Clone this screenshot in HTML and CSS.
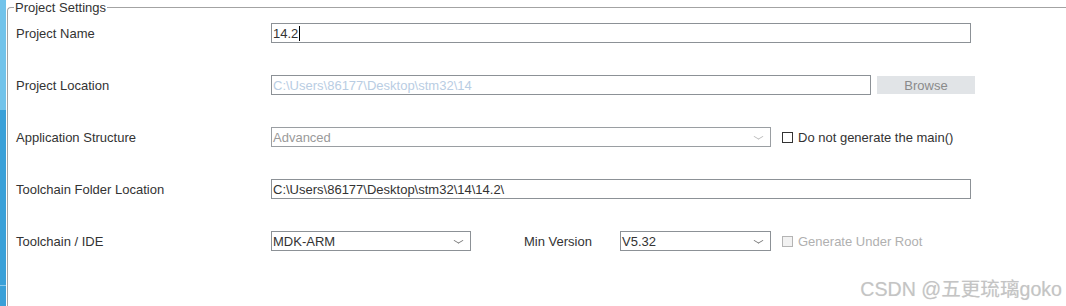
FILE: index.html
```html
<!DOCTYPE html>
<html>
<head>
<meta charset="utf-8">
<link rel="stylesheet" href="styles.css">
</head>
<body>
<div class="page">
  <div class="sidebar"><div class="sb-top"></div><div class="sb-mid"></div><div class="sb-end"></div></div>
  <fieldset class="panel">
    <legend class="legend">Project Settings</legend>
    <div class="rows">
      <div class="row">
        <div class="label">Project Name</div>
        <div class="field w700"><span class="txt">14.2</span><span class="caret"></span></div>
      </div>
      <div class="row">
        <div class="label">Project Location</div>
        <div class="field w600 disabled"><span class="txt">C:\Users\86177\Desktop\stm32\14</span></div>
        <div class="button">Browse</div>
      </div>
      <div class="row">
        <div class="label">Application Structure</div>
        <div class="field select w500 grey"><span class="txt">Advanced</span><span class="chev light"></span></div>
        <div class="check"><span class="box"></span><span class="ctext">Do not generate the main()</span></div>
      </div>
      <div class="row">
        <div class="label">Toolchain Folder Location</div>
        <div class="field w700"><span class="txt">C:\Users\86177\Desktop\stm32\14\14.2\</span></div>
      </div>
      <div class="row">
        <div class="label">Toolchain / IDE</div>
        <div class="field select w200"><span class="txt">MDK-ARM</span><span class="chev"></span></div>
        <div class="minlabel">Min Version</div>
        <div class="field select w151"><span class="txt">V5.32</span><span class="chev"></span></div>
        <div class="check off"><span class="box"></span><span class="ctext">Generate Under Root</span></div>
      </div>
    </div>
  </fieldset>
</div>
<div class="watermark">CSDN @五更琉璃goko</div>
</body>
</html>
```

FILE: styles.css
```css
html, body {
  margin: 0;
  padding: 0;
  background: #ffffff;
  width: 1066px;
  height: 306px;
  overflow: hidden;
  font-family: "Liberation Sans", Arial, sans-serif;
  font-size: 13px;
  color: #333333;
}

.page {
  display: flex;
  height: 306px;
}

.sidebar {
  width: 6px;
  display: flex;
  flex-direction: column;
  margin-right: 1px;
}

.sb-top {
  height: 110px;
  background: #72c3ea;
}

.sb-mid {
  flex: 1;
  background: #3aa0d8;
}

.sb-end {
  height: 20px;
  background: #3aa0d8;
  border-top: 1px solid #8cc8ea;
}

.panel {
  flex: 1;
  margin: 0;
  padding: 0 0 0 8px;
  border: none;
  border-top: 1px solid #a3a3a3;
  border-left: 1px solid #a3a3a3;
  border-top-left-radius: 4px;
  min-width: 0;
}

.legend {
  margin-left: -2px;
  padding: 0 1px;
  font-size: 13px;
  line-height: 15px;
  color: #333333;
}

.rows {
  display: flex;
  flex-direction: column;
  gap: 32px;
  padding-top: 8px;
}

.row {
  display: flex;
  align-items: center;
  height: 20px;
}

.label {
  width: 255px;
  flex: none;
  line-height: 15px;
}

.field {
  box-sizing: border-box;
  height: 20px;
  border: 1px solid #8c9196;
  display: flex;
  align-items: center;
  padding-left: 1px;
  position: relative;
  flex: none;
  color: #333333;
  background: #ffffff;
}

.field .txt {
  line-height: 15px;
}

.caret {
  width: 1px;
  height: 15px;
  background: #000000;
  margin-left: 1px;
}

.w700 { width: 700px; }
.w600 { width: 600px; }
.w500 { width: 500px; }
.w200 { width: 200px; }
.w151 { width: 151px; }

.disabled {
  color: #b9cde3;
}

.grey {
  color: #9a9a9a;
  border-color: #9a9ea2;
}

.chev {
  position: absolute;
  right: 8px;
  top: 5px;
  width: 6px;
  height: 6px;
  border-right: 1px solid #777777;
  border-bottom: 1px solid #777777;
  transform: scaleY(0.6) rotate(45deg);
}

.chev.light {
  border-color: #bbbbbb;
}

.button {
  margin-left: 6px;
  width: 98px;
  height: 18px;
  background: #e1e4e7;
  color: #8a8a8a;
  display: flex;
  align-items: center;
  justify-content: center;
  line-height: 15px;
  flex: none;
}

.check {
  display: flex;
  align-items: center;
  margin-left: 11px;
  line-height: 15px;
}

.check .box {
  box-sizing: border-box;
  width: 11px;
  height: 11px;
  border: 1px solid #333333;
  background: #ffffff;
  margin-right: 5px;
}

.check.off .box {
  border-color: #b4b4b4;
  background: #f2f2f2;
}

.check.off .ctext {
  color: #b0b0b0;
}

.minlabel {
  margin-left: 53px;
  width: 96px;
  flex: none;
  line-height: 15px;
}

.watermark {
  position: absolute;
  right: 4px;
  bottom: 6px;
  font-family: "Liberation Sans", "Noto Sans CJK SC", sans-serif;
  font-size: 19.6px;
  line-height: 22px;
  color: #c4c4c4;
  text-shadow: 0 0 1px #e6e6e6;
}
```
